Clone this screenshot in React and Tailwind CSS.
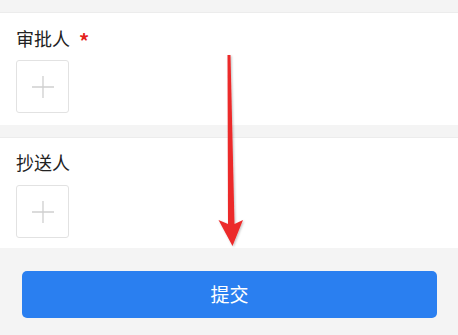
import React from 'react';

const font = { fontFamily: '"Noto Sans CJK SC", "Noto Sans", sans-serif' };

const AddBox = () => (
  <div className="w-[53px] h-[53px] border border-[#e2e2e2] rounded-[3px] flex items-center justify-center bg-white">
    <svg width="24" height="24" viewBox="0 0 24 24">
      <path d="M12 1v22M1 12h22" stroke="#cfcfcf" strokeWidth="1.3" fill="none" />
    </svg>
  </div>
);

const Section = ({ label, required, className, boxGap }) => (
  <div className={`bg-white px-4 border-t border-[#ececec] ${className}`}>
    <div className="h-[24px] flex items-center text-[18px] text-[#222]">
      <span>{label}</span>
      {required && <span className="ml-[9px] text-[#e4211b] text-[20px] font-bold leading-none mt-[5px]">*</span>}
    </div>
    <div className={boxGap}>
      <AddBox />
    </div>
  </div>
);

export default function App() {
  return (
    <div className="relative w-[458px] h-[335px] bg-[#f4f4f4] overflow-hidden" style={font}>
      <div className="h-[12px]" />
      <Section label="审批人" required className="pt-[13px] pb-[12px]" boxGap="mt-[10px]" />
      <div className="h-[12px]" />
      <Section label="抄送人" className="pt-[12px] pb-[10px]" boxGap="mt-[11px]" />
      <div className="pt-[23px] pl-[22px] pr-[21px]">
        <button className="w-full h-[47px] rounded-[5px] bg-[#2a7ff0] text-white text-[19px] flex items-center justify-center">
          提交
        </button>
      </div>

      {/* red annotation arrow */}
      <svg className="absolute left-0 top-0 pointer-events-none" width="458" height="335">
        <defs>
          <filter id="sh" x="-50%" y="-10%" width="200%" height="120%">
            <feDropShadow dx="1" dy="1" stdDeviation="1.2" floodColor="#000" floodOpacity="0.25" />
          </filter>
        </defs>
        <path
          d="M227.5 55 L230.5 55 L234.5 224 L243 220 L232.5 246 L218.5 220 L228 224 Z"
          fill="#ec2b2b"
          filter="url(#sh)"
        />
      </svg>
    </div>
  );
}
